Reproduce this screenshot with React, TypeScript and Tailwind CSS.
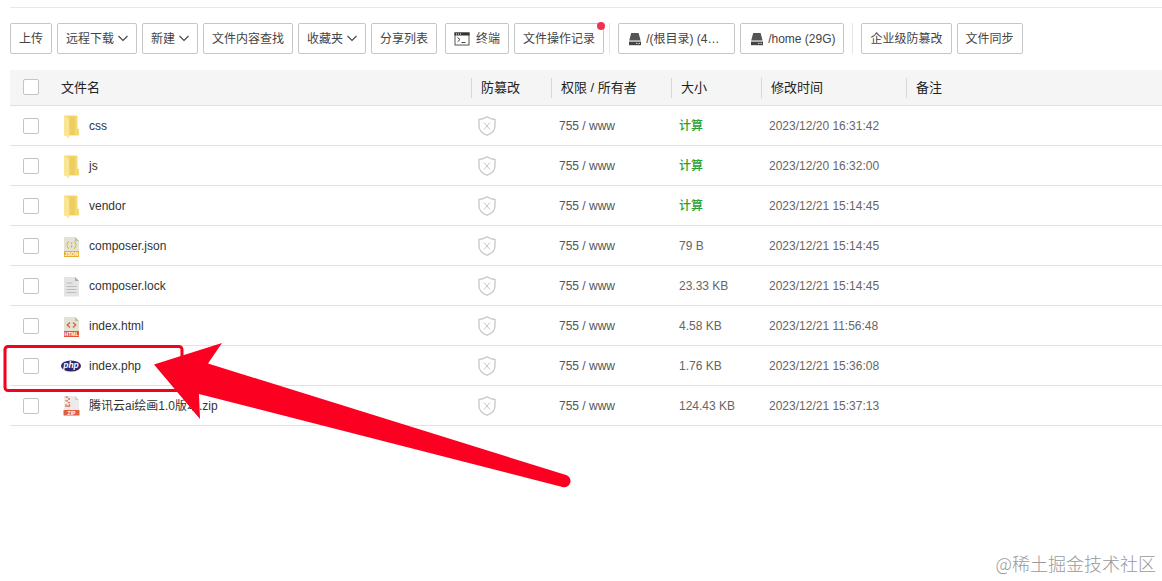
import type { ReactNode } from "react";

type FileKind = "folder" | "json" | "lock" | "html" | "php" | "zip";

type FileRow = {
  name: string;
  kind: FileKind;
  size?: string;
  time: string;
};

const FILES: FileRow[] = [
  { name: "css", kind: "folder", time: "2023/12/20 16:31:42" },
  { name: "js", kind: "folder", time: "2023/12/20 16:32:00" },
  { name: "vendor", kind: "folder", time: "2023/12/21 15:14:45" },
  { name: "composer.json", kind: "json", size: "79 B", time: "2023/12/21 15:14:45" },
  { name: "composer.lock", kind: "lock", size: "23.33 KB", time: "2023/12/21 15:14:45" },
  { name: "index.html", kind: "html", size: "4.58 KB", time: "2023/12/21 11:56:48" },
  { name: "index.php", kind: "php", size: "1.76 KB", time: "2023/12/21 15:36:08" },
  { name: "腾讯云ai绘画1.0版本.zip", kind: "zip", size: "124.43 KB", time: "2023/12/21 15:37:13" },
];

function ChevronIcon() {
  return (
    <svg className="ml-1 shrink-0" width="10" height="10" viewBox="0 0 10 10" fill="none" stroke="#444" strokeWidth="1.1">
      <path d="M0.5 2 L5 6.5 L9.5 2" />
    </svg>
  );
}

function TerminalIcon() {
  return (
    <svg className="mr-1.5 shrink-0" width="16" height="14" viewBox="0 0 16 14" fill="none">
      <rect x="1" y="1" width="14" height="12" stroke="#555" />
      <path d="M0.5 0.5h15v3h-15z" fill="#333" />
      <path d="M2 2h1M4 2h1M6 2h1" stroke="#fff" />
      <path d="M3.5 5.5 L6 7.5 L3.5 9.8M7.5 10.5h4" stroke="#444" />
    </svg>
  );
}

function DiskIcon() {
  return (
    <svg className="mr-[3px] shrink-0" width="16" height="14" viewBox="0 0 16 14">
      <path d="M4.2 1h7.4l2 7.6H2.2z" fill="#555" />
      <path d="M2 9.6h12v3.6H2z" fill="#444" />
      <path d="M9.2 11.4h1.2M11.6 11.4h1.2" stroke="#fff" />
    </svg>
  );
}

function ShieldIcon() {
  return (
    <svg width="18" height="20" viewBox="0 0 18 20" fill="none" stroke="#c8c8c8">
      <path d="M9 0.8C6.8 2.4 4 3.3 1 3.5V10c0 4.3 3.2 7.3 8 9.2 4.8-1.9 8-4.9 8-9.2V3.5C14 3.3 11.2 2.4 9 0.8Z" strokeWidth="1.3" />
      <path d="M6 6.5l6 7M12 6.5l-6 7" />
    </svg>
  );
}

function FileIcon({ kind }: { kind: FileKind }) {
  if (kind === "folder") {
    return (
      <svg width="20" height="26" viewBox="0 -2 20 26">
        <path d="M3 0.5h13.5v13l1.5 1v6H5z" fill="#f3d970" />
        <path d="M8.5 1.5h5.5v18.5H8.5z" fill="#ecce61" />
        <path d="M3 0.5l5 3v20.5L6 21.5 3 20.5z" fill="#fae692" />
      </svg>
    );
  }
  if (kind === "php") {
    return (
      <svg width="20" height="12" viewBox="0 0 20 12">
        <ellipse cx="10" cy="6" rx="10" ry="5.6" fill="#2b2471" />
        <text x="10" y="8" fontSize="8.5" fontWeight="700" fontStyle="italic" fill="#fff" textAnchor="middle">php</text>
      </svg>
    );
  }
  if (kind === "lock") {
    return (
      <svg width="20" height="22" viewBox="0 -2 20 22">
        <path d="M3 0h11l4 4v15.5H3z" fill="#e4e4e4" />
        <path d="M14 0l4 4h-4z" fill="#aaa" />
        <path d="M5.5 6h6M5.5 9.5h10M5.5 12.5h10M5.5 15.5h10" stroke="#bcbcbc" />
      </svg>
    );
  }
  if (kind === "zip") {
    return (
      <svg width="20" height="22" viewBox="0 -1 20 22">
        <path d="M3 0h11l4 4v15.5H3z" fill="#ebebeb" />
        <path d="M14 0l4 4h-4z" fill="#cfcfcf" />
        <path d="M4.5 1.2h2.5M7 3h2M4.5 4.8h2.5M7 6.6h2M5 8.2v2h3.5v-2" fill="none" stroke="#e8694a" strokeWidth="1.3" />
        <path d="M2.5 14h16v5.5h-16z" fill="#e2603f" />
        <text x="10.5" y="18.6" fontSize="5" fontWeight="700" fill="#fff" textAnchor="middle">ZIP</text>
      </svg>
    );
  }
  const json = kind === "json";
  return (
    <svg width="20" height="22" viewBox="0 -2 20 22">
      <path d="M3 0h11l4 4v15.5H3z" fill="#e3e3d4" />
      <path d="M14 0l4 4h-4z" fill="#b9bdb0" />
      {json ? (
        <>
          <path d="M8 4.5c-2 0-1 3-2.5 3.5 1.5 0.5 0.5 3.5 2.5 3.5M13 4.5c2 0 1 3 2.5 3.5-1.5 0.5-0.5 3.5-2.5 3.5" fill="none" stroke="#dfb443" />
          <path d="M10.5 5.5v1.4M10.5 8.5v2" stroke="#a9bd6b" strokeWidth="1.3" />
        </>
      ) : (
        <path d="M9 5.5L6.2 8 9 10.5M12 5.5L14.8 8 12 10.5" fill="none" stroke="#e2563a" strokeWidth="1.2" />
      )}
      <path d="M3 14h15v6H3z" fill={json ? "#e9ac35" : "#e5533a"} />
      <text x="10.5" y="18.9" fontSize="5" fontWeight="700" fill="#fff" textAnchor="middle">{json ? "JSON" : "HTML"}</text>
    </svg>
  );
}

function ToolButton({ children }: { children: ReactNode }) {
  return (
    <button className="relative flex h-[31px] shrink-0 items-center rounded-xs border border-[#c6c6c6] bg-white px-2 text-xs whitespace-nowrap text-[#444] hover:bg-gray-50">
      {children}
    </button>
  );
}

function HeadCell({ children, className }: { children: string; className: string }) {
  return (
    <th className={className}>
      <div className="border-l border-[#d8d8d8] pl-[9px] leading-5">{children}</div>
    </th>
  );
}

function Check({ label }: { label: string }) {
  return (
    <input
      type="checkbox"
      aria-label={label}
      className="block size-4 appearance-none rounded-xs border border-[#c4c4c4] bg-white checked:bg-[#20a53a]"
    />
  );
}

function Toolbar() {
  return (
    <div className="flex items-center gap-2">
      <div className="flex gap-[5px]">
        <ToolButton>上传</ToolButton>
        <ToolButton>远程下载<ChevronIcon /></ToolButton>
        <ToolButton>新建<ChevronIcon /></ToolButton>
        <ToolButton>文件内容查找</ToolButton>
        <ToolButton>收藏夹<ChevronIcon /></ToolButton>
        <ToolButton>分享列表</ToolButton>
      </div>
      <div className="flex gap-[5px]">
        <ToolButton><TerminalIcon />终端</ToolButton>
        <ToolButton>
          文件操作记录
          <span className="absolute -top-0.5 -right-0.5 size-2 rounded-full bg-[#ee3350]" />
        </ToolButton>
        <div className="w-px bg-[#e6e6e6]" />
      </div>
      <div className="flex gap-[5px]">
        <ToolButton>
          <DiskIcon />
          <span className="w-20 truncate text-left">/(根目录) (40G)</span>
        </ToolButton>
        <ToolButton><DiskIcon />/home (29G)</ToolButton>
      </div>
      <div className="flex gap-2">
        <div className="w-px bg-[#e6e6e6]" />
        <div className="flex gap-[5px]">
          <ToolButton>企业级防篡改</ToolButton>
          <ToolButton>文件同步</ToolButton>
        </div>
      </div>
    </div>
  );
}

function FileTable() {
  return (
    <table className="w-full table-fixed text-left text-xs text-[#666] [&_td]:pt-px">
      <thead>
        <tr className="h-[35px] border-b border-[#e2e2e2] bg-[#f5f5f5] text-[13px] text-[#222] [&_th]:font-normal">
          <th className="w-[41px] pl-[13px]"><Check label="全选" /></th>
          <th className="pl-2.5">文件名</th>
          <HeadCell className="w-20 pt-px">防篡改</HeadCell>
          <HeadCell className="w-[120px] pt-px">权限 / 所有者</HeadCell>
          <HeadCell className="w-[90px] pt-px">大小</HeadCell>
          <HeadCell className="w-[145px] pt-px">修改时间</HeadCell>
          <HeadCell className="w-64 pt-px">备注</HeadCell>
        </tr>
      </thead>
      <tbody>
        {FILES.map(file => (
          <tr key={file.name} className="h-10 border-b border-[#e2e2e2]">
            <td className="pl-[13px]"><Check label={file.name} /></td>
            <td className="pl-2.5">
              <a href="#" className="flex items-center gap-2 text-[#333]">
                <FileIcon kind={file.kind} />
                {file.name}
              </a>
            </td>
            <td className="pl-[7px]"><ShieldIcon /></td>
            <td className="pl-2 text-[#555]">755 / www</td>
            <td className="pl-2">
              {file.size ?? <button className="font-medium text-[#2ba02f]">计算</button>}
            </td>
            <td className="pl-2">{file.time}</td>
            <td />
          </tr>
        ))}
      </tbody>
    </table>
  );
}

// Red frame and arrow pointing at index.php
function Annotation() {
  return (
    <svg className="pointer-events-none absolute top-0 left-0" width="580" height="500" viewBox="0 0 580 500">
      <rect x="5" y="346.5" width="177" height="44" rx="3" fill="none" stroke="#f5001d" strokeWidth="3" />
      <path d="M154 364.5L222 343L208 363.5L566 475A6 6 0 0 1 562.5 487L199 394L200 419Z" fill="#fb0020" />
    </svg>
  );
}

export default function App() {
  return (
    <div className="relative flex min-h-screen flex-col overflow-hidden bg-white pl-2.5 font-['Liberation_Sans','Noto_Sans_CJK_SC',sans-serif]">
      <div className="mt-[7px] border-t border-[#e8e8e8] pt-[15px] pb-4">
        <Toolbar />
      </div>
      <FileTable />
      <Annotation />
      <footer className="mt-auto pr-1.5 pb-1.5 text-right font-['Noto_Sans_CJK_SC',sans-serif] text-lg leading-6 font-light text-[#999]">
        @稀土掘金技术社区
      </footer>
    </div>
  );
}
